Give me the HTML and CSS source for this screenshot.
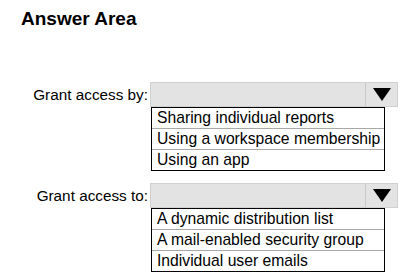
FILE: index.html
```html
<!DOCTYPE html>
<html lang="en">
  <head>
    <meta charset="UTF-8" />
    <title>Answer Area</title>
    <link rel="stylesheet" href="styles.css">
  </head>
  <body>
    <div class="area">
      <h1>Answer Area</h1>

      <div class="question">
        <div class="label">Grant access by:</div>
        <div class="field">
          <div class="select">
            <span class="value"></span>
            <span class="arrow"><span class="tri"></span></span>
          </div>
          <ul class="options">
            <li>Sharing individual reports</li>
            <li>Using a workspace membership</li>
            <li>Using an app</li>
          </ul>
        </div>
      </div>

      <div class="question">
        <div class="label">Grant access to:</div>
        <div class="field">
          <div class="select">
            <span class="value"></span>
            <span class="arrow"><span class="tri"></span></span>
          </div>
          <ul class="options">
            <li>A dynamic distribution list</li>
            <li>A mail-enabled security group</li>
            <li>Individual user emails</li>
          </ul>
        </div>
      </div>
    </div>
  </body>
</html>
```

FILE: styles.css
```css
/* General Styles */
body {
  font-family: "Liberation Sans", Arial, sans-serif;
  background: #fff;
  color: #000;
  margin: 0;
  padding: 0;
}
.area {
  padding: 7px 0 0 21px;
}
h1 {
  font-size: 19px;
  font-weight: bold;
  margin: 0 0 52px 0;
  line-height: 23px;
}
.question {
  display: flex;
  align-items: flex-start;
  margin-bottom: 12px;
}
.label {
  width: 127px;
  text-align: right;
  font-size: 15.3px;
  line-height: 25px;
  padding-right: 2px;
}
.field {
  width: 248px;
}
.select {
  display: flex;
  height: 25px;
  background: #e3e3e3;
  box-sizing: border-box;
  border: 1px solid #d0d0d0;
}
.value {
  flex: 1;
}
.arrow {
  width: 31px;
  border-left: 1px solid #c8c8c8;
  display: flex;
  align-items: center;
  justify-content: center;
}
.tri {
  width: 0;
  height: 0;
  border-left: 9px solid transparent;
  border-right: 9px solid transparent;
  border-top: 13px solid #000;
}
.options {
  list-style: none;
  margin: 0 0 0 1px;
  padding: 0;
  width: 234px;
  border: 1px solid #000;
  box-sizing: border-box;
}
.options li {
  font-size: 15.7px;
  line-height: 20px;
  padding-left: 5px;
  border-top: 1px solid #a8a8a8;
}
.options li:first-child {
  border-top: none;
}
```
